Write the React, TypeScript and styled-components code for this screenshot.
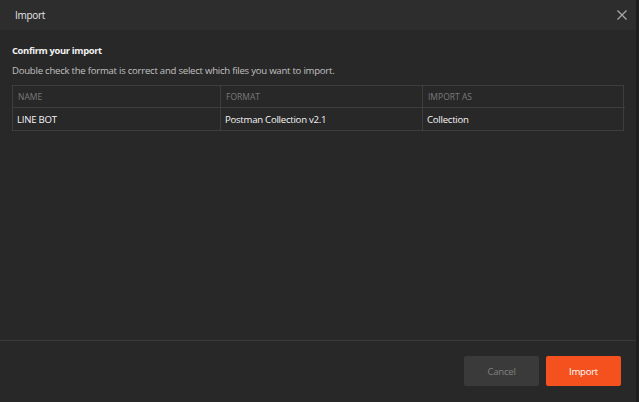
import React from "react";
import styled, { createGlobalStyle } from "styled-components";

const Global = createGlobalStyle`
  html, body { margin: 0; padding: 0; background: #1e1e1e; }
  body { font-family: "Open Sans", "Noto Sans", sans-serif; -webkit-font-smoothing: antialiased; }
  * { box-sizing: border-box; }
`;

const Modal = styled.div`
  width: 636px;
  height: 402px;
  background: #282828;
  display: flex;
  flex-direction: column;
`;

const Header = styled.div`
  height: 30px;
  background: #2d2d2d;
  display: flex;
  align-items: center;
  justify-content: space-between;
  padding: 0 9px 0 15px;
  color: #e6e6e6;
  font-size: 10px;
  letter-spacing: -0.3px;
`;

const Close = styled.button`
  background: none;
  border: none;
  padding: 0;
  width: 10px;
  height: 10px;
  display: flex;
  align-items: center;
  justify-content: center;
  color: #a6a6a6;
`;

const Body = styled.div`
  flex: 1;
  padding: 13px 12px 0 12px;
  display: flex;
  flex-direction: column;
`;

const Title = styled.div`
  font-size: 9.4px;
  font-weight: 700;
  letter-spacing: -0.35px;
  color: #f2f2f2;
  line-height: 15px;
`;

const Desc = styled.div`
  margin-top: 5px;
  font-size: 9.6px;
  letter-spacing: -0.25px;
  color: #c0c0c0;
  line-height: 15px;
`;

const Table = styled.div`
  margin-top: 7px;
  width: 612px;
  display: grid;
  grid-template-columns: 208px 202px 202px;
  border: 1px solid #3e3e3e;
`;

const Cell = styled.div<{ $head?: boolean; $last?: boolean }>`
  height: 22px;
  display: flex;
  align-items: center;
  padding-left: ${(p) => (p.$head ? "5px" : "4px")};
  font-size: ${(p) => (p.$head ? "8.5px" : "9.6px")};
  letter-spacing: ${(p) => (p.$head ? "0" : "-0.25px")};
  color: ${(p) => (p.$head ? "#7a7a7a" : "#f4f4f4")};
  border-right: ${(p) => (p.$last ? "none" : "1px solid #3e3e3e")};
  border-bottom: ${(p) => (p.$head ? "1px solid #3e3e3e" : "none")};
  text-transform: ${(p) => (p.$head ? "uppercase" : "none")};
`;

const Footer = styled.div`
  height: 62px;
  border-top: 1px solid #3a3a3a;
  display: flex;
  justify-content: flex-end;
  align-items: flex-start;
  gap: 7px;
  padding: 15px 15px 0 0;
`;

const Button = styled.button<{ $primary?: boolean }>`
  width: 75px;
  height: 30px;
  border: none;
  border-radius: 2px;
  font-family: "Open Sans", "Noto Sans", sans-serif;
  font-size: 9.6px;
  letter-spacing: -0.25px;
  background: ${(p) => (p.$primary ? "#f4511e" : "#3a3a3a")};
  color: ${(p) => (p.$primary ? "#ffffff" : "#808080")};
`;

export default function App() {
  return (
    <>
      <Global />
      <Modal>
        <Header>
          <span>Import</span>
          <Close aria-label="close">
            <svg width="10" height="10" viewBox="0 0 10 10">
              <path d="M0.5 0.5 L9.5 9.5 M9.5 0.5 L0.5 9.5" stroke="currentColor" strokeWidth="1.3" />
            </svg>
          </Close>
        </Header>
        <Body>
          <Title>Confirm your import</Title>
          <Desc>Double check the format is correct and select which files you want to import.</Desc>
          <Table>
            <Cell $head>Name</Cell>
            <Cell $head>Format</Cell>
            <Cell $head $last>Import as</Cell>
            <Cell>LINE BOT</Cell>
            <Cell>Postman Collection v2.1</Cell>
            <Cell $last>Collection</Cell>
          </Table>
        </Body>
        <Footer>
          <Button>Cancel</Button>
          <Button $primary>Import</Button>
        </Footer>
      </Modal>
    </>
  );
}
